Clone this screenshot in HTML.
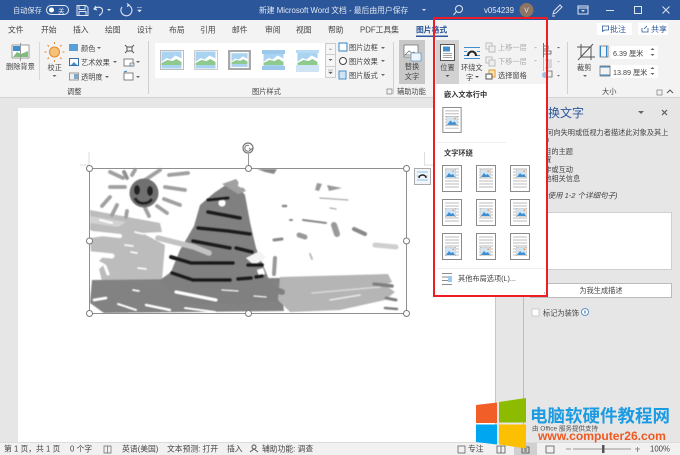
<!DOCTYPE html>
<html><head><meta charset="utf-8"><style>
html,body{margin:0;padding:0;background:#e6e6e6;width:680px;height:455px;overflow:hidden}
svg{display:block;filter:blur(.35px);font-size:7.2px}
text{font-family:"Liberation Sans","Noto Sans CJK SC",sans-serif;fill:#444}
.w{fill:#e4e9f2}.g{fill:#aaa}.b{font-weight:700;fill:#333}
.mid{text-anchor:middle}
</style></head><body>
<svg width="680" height="455" viewBox="0 0 680 455" xmlns="http://www.w3.org/2000/svg">
<defs>
<symbol id="th" viewBox="0 0 23 20"><rect width="23" height="20" fill="#fff"/><rect x="1.500" y="1.500" width="20" height="17" fill="#a9d3f0"/><path d="M1.500 12l5-4 4 1.500 5-4 6 3v7h-20z" fill="#fff"/><path d="M1.500 13l6-3 5 1 4-2 5 3v3h-20z" fill="#8ec98e"/><rect x="1.500" y="15" width="20" height="3.500" fill="#a9d3f0"/></symbol>
<symbol id="pg" viewBox="0 0 20 27"><rect x=".5" y=".5" width="19" height="26" fill="#fff" stroke="#8a8a8a"/><path d="M3 4h14M3 7h14M3 10h14M3 13h14M3 16h14M3 19h14M3 22h14" stroke="#bbb"/></symbol>
<symbol id="pc" viewBox="0 0 11 9"><rect width="11" height="9" fill="#fff" stroke="#777" stroke-width=".6"/><rect x="1" y="1" width="9" height="7" fill="#cfe4f5"/><path d="M1 8l3-4 2 2 2-1 2 3z" fill="#3f8fd0"/><rect x="7.500" y="1.500" width="1.500" height="1.500" fill="#ee9a55"/></symbol>
<filter id="soft"><feGaussianBlur stdDeviation=".5"/></filter>
</defs>

<!-- base -->
<rect width="680" height="455" fill="#e6e6e6"/>
<rect width="680" height="20" fill="#2b579a"/>
<rect y="20" width="680" height="77" fill="#f3f3f3"/>
<rect y="97" width="680" height="1" fill="#d2d2d2"/>

<!-- title bar -->
<text x="13" y="13" class="w">自动保存</text>
<rect x="46.500" y="5.500" width="22" height="9" rx="4.500" fill="none" stroke="#e4e9f2"/>
<circle cx="51.500" cy="10" r="2.500" fill="#fff"/><text x="58" y="13" class="w" style="font-size:6.500px">关</text>
<path d="M77 5.500h9l2 2v8h-11zM79 5.500v4h6v-4M79 15.500v-4h7v4" fill="none" stroke="#dfe5f0"/>
<path d="M96 6l-2 3 3 1M94.500 9c3-3 8-2 8 1.500 0 2-1.500 4-3.500 5" fill="none" stroke="#dfe5f0" stroke-width="1.100"/>
<path d="M107 9l2 2 2-2z" fill="#dfe5f0"/>
<path d="M127 6.500l2-1.500-2-1.500M128 5a5.500 5.500 0 1 1-6 2" fill="none" stroke="#dfe5f0" stroke-width="1.100"/>
<path d="M137 7.500h5M137.500 10l2 2 2-2z" fill="#dfe5f0" stroke="#dfe5f0" stroke-width=".5"/>
<text x="259" y="13" class="w" style="font-size:7.800px">新建 Microsoft Word 文档 - 最后由用户保存</text>
<path d="M422 9l2 2 2-2z" fill="#dfe5f0"/>
<circle cx="459" cy="9" r="3.500" fill="none" stroke="#dfe5f0"/><path d="M456.500 11.500l-3 3.500" stroke="#dfe5f0"/>
<text x="484" y="13" class="w" style="font-size:7.800px">v054239</text>
<circle cx="526.500" cy="10" r="7" fill="#8d7463"/><text x="526.500" y="12.500" class="w mid" style="font-size:7px">V</text>
<path d="M553 14l1-3 6-6 2 2-6 6zM552 16h3" fill="none" stroke="#dfe5f0"/>
<path d="M578 6h10v8h-10zM578 8h10" fill="none" stroke="#dfe5f0"/><path d="M581 10h4l-2 2z" fill="#dfe5f0"/>
<path d="M606 10.500h8" stroke="#dfe5f0"/>
<rect x="634.500" y="6.500" width="7" height="7" fill="none" stroke="#dfe5f0"/>
<path d="M662.500 6.500l7 7M669.500 6.500l-7 7" stroke="#dfe5f0"/>

<!-- tabs -->
<g style="font-size:7.800px">
<text x="8" y="32.500">文件</text><text x="41" y="32.500">开始</text><text x="73" y="32.500">插入</text><text x="105" y="32.500">绘图</text><text x="137" y="32.500">设计</text><text x="169" y="32.500">布局</text><text x="200" y="32.500">引用</text><text x="232" y="32.500">邮件</text><text x="265" y="32.500">审阅</text><text x="296" y="32.500">视图</text><text x="328" y="32.500">帮助</text><text x="360" y="32.500">PDF工具集</text>
<text x="416" y="32.500" style="fill:#2b579a;font-weight:700">图片格式</text>
</g>
<rect x="416" y="35.500" width="32" height="1.500" fill="#2b579a"/>
<rect x="597" y="23" width="35" height="12" fill="#fff"/><rect x="638" y="23" width="30" height="12" fill="#fff"/>
<path d="M602.500 26h6v4h-4l-2 1.500z" fill="none" stroke="#2b579a" stroke-width=".8"/>
<text x="610" y="32" style="fill:#2b579a;font-size:8px">批注</text>
<path d="M642 28v4h6v-4M644 29l3-3" fill="none" stroke="#2b579a" stroke-width=".8"/>
<text x="651" y="32" style="fill:#2b579a;font-size:8px">共享</text>

<!-- ribbon: adjust -->
<rect x="12" y="45" width="17" height="13" fill="#fff" stroke="#777" stroke-width=".7"/>
<rect x="13" y="46" width="8" height="5" fill="#3f8fd0"/><path d="M13 57l4-5 4 2 7-3v6z" fill="#7bbf7b"/><path d="M20.500 43v18" stroke="#999"/>
<text x="6" y="69">删除背景</text>
<path d="M39.500 42v38" stroke="#d8d8d8"/>
<circle cx="54.500" cy="52" r="5" fill="#f5c27a" stroke="#e48a2c"/>
<path d="M54.500 44v-2M54.500 62v-2M46.500 52h-2M64.500 52h-2M49 46.500l-1.500-1.500M60 46.500l1.500-1.500M49 57.500l-1.500 1.500M60 57.500l1.500 1.500" stroke="#e48a2c"/>
<text x="47.500" y="70">校正</text><path d="M52.500 75l2 2 2-2z" fill="#666"/>
<rect x="69" y="44" width="9" height="7" fill="#5aa0d8"/><text x="81" y="51">颜色</text><path d="M97 47l2 2 2-2z" fill="#666"/>
<rect x="69.500" y="58.500" width="9" height="7" fill="#fff" stroke="#3a6ea5"/><path d="M71 65l3-3 3 3z" fill="#3f8fd0"/><text x="81" y="65">艺术效果</text><path d="M113 61l2 2 2-2z" fill="#666"/>
<rect x="69.500" y="73" width="9" height="7" fill="#eee" stroke="#999"/><rect x="74" y="74" width="4" height="5" fill="#7aa8d0"/><text x="81" y="79.500">透明度</text><path d="M105 76l2 2 2-2z" fill="#666"/>
<path d="M125 45l2 2h5l2-2M134 53l-2-2v-4M125 53l2-2h5M127 51v-4" fill="none" stroke="#555"/>
<rect x="124" y="59" width="9" height="7" fill="#fff" stroke="#666" stroke-width=".8"/><path d="M130 63h4v3h-4z" fill="#cfe4f5" stroke="#555" stroke-width=".6"/><path d="M136 61l2 2 2-2z" fill="#666"/>
<rect x="124" y="73" width="9" height="7" fill="#fff" stroke="#666" stroke-width=".8"/><path d="M124 72l3-1" stroke="#2f86c8"/><path d="M136 76l2 2 2-2z" fill="#666"/>
<text x="67" y="94">调整</text>
<path d="M148.500 41v53" stroke="#cfcfcf"/>

<!-- gallery -->
<rect x="155" y="43" width="170" height="35" fill="#fff"/>
<use href="#th" x="160" y="50" width="23" height="20"/><rect x="160.500" y="50.500" width="23" height="19" fill="none" stroke="#bbb"/>
<use href="#th" x="194" y="50" width="23" height="20"/><rect x="194.500" y="50.500" width="23" height="19" fill="none" stroke="#ccc"/>
<rect x="228" y="50" width="23" height="20" fill="#a8a8a8"/><use href="#th" x="230" y="52" width="19" height="16"/>
<use href="#th" x="262" y="50" width="23" height="20"/><rect x="262" y="50" width="23" height="4" fill="#9cc9ea"/><rect x="262" y="66" width="23" height="4" fill="#9cc9ea"/>
<use href="#th" x="296" y="50" width="23" height="20"/><rect x="296" y="50" width="23" height="3" fill="#b8daf2"/><rect x="296" y="65" width="23" height="7" fill="#cfe4f5"/>
<rect x="325.500" y="43.500" width="10" height="11" fill="#f6f6f6" stroke="#ccc"/><rect x="325.500" y="54.500" width="10" height="12" fill="#f6f6f6" stroke="#ccc"/><rect x="325.500" y="66.500" width="10" height="11" fill="#f6f6f6" stroke="#ccc"/>
<path d="M328.500 50l2-2 2 2z" fill="#bbb"/><path d="M328.500 59l2 2 2-2z" fill="#666"/><path d="M328 70h5M328.500 72l2 2 2-2z" fill="#666" stroke="#666" stroke-width=".4"/>
<text x="252" y="94">图片样式</text>
<rect x="339" y="43" width="8" height="8" fill="#fff" stroke="#2f86c8"/><text x="349" y="50">图片边框</text><path d="M381 47l2 2 2-2z" fill="#666"/>
<circle cx="343" cy="61" r="3.500" fill="#fff" stroke="#444"/><text x="349" y="64">图片效果</text><path d="M381 60l2 2 2-2z" fill="#666"/>
<rect x="339" y="71" width="7" height="8" fill="#cfe4f5" stroke="#4e8fc4"/><text x="349" y="78">图片版式</text><path d="M381 74l2 2 2-2z" fill="#666"/>
<path d="M393.500 42v52" stroke="#d0d0d0"/>
<rect x="387" y="89" width="5" height="5" fill="none" stroke="#777" stroke-width=".7"/>

<!-- alt text btn -->
<rect x="399" y="40" width="26" height="44" fill="#c8c8c8"/>
<rect x="404" y="45" width="14" height="12" fill="#fff" stroke="#666" stroke-width=".7"/><path d="M405 55l4-4 3 2 2-1 3 3z" fill="none" stroke="#666" stroke-width=".7"/>
<rect x="411" y="53" width="10" height="8" fill="#eef4fa" stroke="#5b95c8" stroke-width=".7"/>
<text x="412" y="69" class="mid">替换</text><text x="412" y="79" class="mid">文字</text>
<text x="397" y="94">辅助功能</text>

<!-- position & wrap -->
<rect x="436" y="40" width="23" height="44" fill="#d2d2d2"/>
<rect x="440.500" y="44.500" width="14" height="16" fill="#fff" stroke="#555"/><rect x="443" y="46.500" width="7" height="5" fill="#3f8fd0"/><path d="M443 53.500h9M443 55.500h9M443 57.500h9" stroke="#888" stroke-width=".7"/>
<text x="447.500" y="70" class="mid">位置</text><path d="M445.500 75l2 2 2-2z" fill="#555"/>
<path d="M464 47.500h16M464 51.500h3M477 51.500h3M464 55.500h3M477 55.500h3M464 58.500h16" stroke="#3f8fd0"/>
<path d="M468 56c0-6 8-6 8 0" fill="none" stroke="#222" stroke-width="2"/>
<text x="461" y="70">环绕文</text><text x="466" y="80">字</text><path d="M475 76l2 2 2-2z" fill="#555"/>
<g fill="none" stroke="#bdbdbd"><rect x="486" y="43" width="6" height="6"/><rect x="489" y="46" width="6" height="6" fill="#eee"/><rect x="486" y="57" width="6" height="6"/><rect x="489" y="60" width="6" height="6" fill="#eee"/></g>
<text x="498" y="50" class="g">上移一层</text><path d="M534 47l1.500 1.500 1.500-1.500z" fill="#bbb"/>
<text x="498" y="64" class="g">下移一层</text><path d="M534 60l1.500 1.500 1.500-1.500z" fill="#bbb"/>
<rect x="489" y="70" width="6" height="7" fill="#fbe3b8" stroke="#e49a2e"/><rect x="486" y="74" width="6" height="5" fill="#fff" stroke="#555"/>
<text x="498" y="78">选择窗格</text>
<path d="M543.500 43v15M544 46h4v3h-4M544 51h7v3h-7" fill="none" stroke="#555" stroke-width=".8"/><path d="M557 47l1.500 1.500 1.500-1.500z" fill="#666"/>
<path d="M543.500 57v14M545 60h4v8h-4M551 59v9" fill="none" stroke="#aaa" stroke-width=".8"/><path d="M557 61l1.500 1.500 1.500-1.500z" fill="#bbb"/>
<circle cx="545" cy="75" r="3" fill="#9bc3e6"/><path d="M548 71h4v6h-4" fill="none" stroke="#666" stroke-width=".8"/><path d="M557 75l1.500 1.500 1.500-1.500z" fill="#666"/>
<path d="M567.500 42v52" stroke="#d0d0d0"/>

<!-- crop & size -->
<path d="M577 47h14v13M581 44v13h14M578 60l15-16" fill="none" stroke="#555"/>
<text x="577" y="70">裁剪</text><path d="M583 75l2 2 2-2z" fill="#666"/>
<path d="M600 46h8v11h-8z" fill="none" stroke="#666" stroke-width=".7"/><path d="M600.500 46v11M606.500 46v11" stroke="#2f86c8"/>
<rect x="611" y="46" width="47" height="13" fill="#fff"/><text x="613" y="56">6.39 厘米</text><path d="M650.500 50l2-2 2 2zM650.500 54l2 2 2-2z" fill="#666"/>
<path d="M600 66h10v10h-10z" fill="none" stroke="#666" stroke-width=".7"/><path d="M600 67h10M600 75h10" stroke="#2f86c8"/>
<rect x="611" y="65" width="47" height="13" fill="#fff"/><text x="613" y="75">13.89 厘米</text><path d="M650.500 69l2-2 2 2zM650.500 73l2 2 2-2z" fill="#666"/>
<text x="602" y="94">大小</text>
<rect x="657" y="90" width="5" height="5" fill="none" stroke="#777" stroke-width=".7"/>
<path d="M667 93l3-3 3 3" fill="none" stroke="#555"/>

<!-- doc page -->
<rect x="18" y="108" width="477" height="334" fill="#fff"/>
<path d="M89 152v13h-9M424.500 152v13h9" stroke="#ddd" fill="none"/>
<rect x="495" y="98" width="28" height="344" fill="#e6e6e6"/>
<path d="M495.500 98v344" stroke="#c6c6c6"/>
<path d="M523.500 98v344" stroke="#bcbcbc"/>

<!-- picture -->
<g filter="url(#soft)">
<path d="M90 210l70 13 2 9-20 1 23 12-3 35-60 1-3-12 6-5-6-3 6-6-14-3-1-14 14-2-14-6z" fill="#bcbcbc"/>
<path d="M90 216l36 6-8 5-28-4z" fill="#d2d2d2"/>
<g fill="none" stroke="#fff" stroke-linecap="round">
 <path d="M100 220l12 3" stroke-width="2"/><path d="M92 233l28 3" stroke-width="4"/><path d="M135 232l8 2" stroke-width="1.500"/>
 <path d="M92 254l20 2" stroke-width="5"/><path d="M125 245l8 1" stroke-width="1.500"/><path d="M131 252l6 1" stroke-width="1.500"/><path d="M138 268l8 1" stroke-width="1.500"/>
 <path d="M105 266l3 8" stroke-width="3"/><path d="M90 272l6 0" stroke-width="6"/>
</g>
<path d="M92 280l188-2 4 33-180 2-14-10z" fill="#828282"/>
<path d="M233 180l12 15 5 27 6 26 14 34 12 20-100 2-22-24 11-8 9-22 14-24 6-21 14-12z" fill="#808080"/>
<path d="M222 184l14-5 10 12-8 3z" fill="#a0a0a0"/>
<path d="M239 180l6 3-3 5-4-2z" fill="#fff"/><circle cx="222" cy="203" r="3.500" fill="#fff"/>
<path d="M246 258l14-7 6 7-12 7z" fill="#f4f4f4"/><path d="M257 270l6-2 2 6-6 2z" fill="#fff"/>
<g fill="none" stroke="#1a1a1a" stroke-width="3.800" stroke-linecap="round">
 <path d="M208 200l20-2" stroke-width="3.300"/><path d="M208 212l32 6"/><path d="M198 228l30 3 22 3"/><path d="M193 241l37 7"/><path d="M236 248l16 4"/><path d="M171 257l20 6 42 0"/><path d="M248 265l14 0"/><path d="M172 273l21 7 37 0"/><path d="M238 279l13-1"/><path d="M256 277l6-1"/>
</g>
<path d="M158 238l36 9 15 6" fill="none" stroke="#c2c2c2" stroke-width="5.500" stroke-linecap="round"/>
<g fill="none" stroke="#fff" stroke-linecap="round">
 <path d="M176 292l40 8" stroke-width="3"/><path d="M146 305l24 5" stroke-width="2.200"/><path d="M118 304l18 6" stroke-width="1.800"/><path d="M94 300l12-2" stroke-width="2.500"/><path d="M133 290l6 1" stroke-width="1.500"/><path d="M185 308l30 4" stroke-width="1.800"/><path d="M222 290l16 1" stroke-width="1"/><path d="M262 285l10 3" stroke-width="1"/>
 <path d="M254 296l12 1" stroke-width="1"/>
</g>
<path d="M280 277l108-3 4 8-7 3 10 7-10 8-45 10-50 2-12-12z" fill="#b5b5b5"/>
<g fill="none" stroke-linecap="round">
 <path d="M312 293l68-6" stroke="#d8d8d8" stroke-width="1.500"/><path d="M330 300l30-5" stroke="#e8e8e8" stroke-width="1.500"/>
 <g stroke="#808080"><path d="M374 284l18 2" stroke-width="3.500"/><path d="M386 298l10 2" stroke-width="3"/><path d="M385 308l12 1" stroke-width="2.500"/><path d="M275 258l-1 16" stroke="#999" stroke-width="4"/></g>
 <path d="M264 286l18 6" stroke="#808080" stroke-width="6"/>
</g>
<path d="M257 169h20l-3 5-9-2z" fill="#888"/>
<path d="M315 190l2-7 5 1-3 7zM327 185l15 3-13 3z" fill="#9a9a9a"/>
<g fill="none" stroke="#888" stroke-linecap="round">
 <path d="M283 206h3" stroke-width="2.500"/><path d="M303 220l23 3" stroke-width="2"/><path d="M334 225l3 9" stroke-width="6" stroke="#999"/><path d="M354 229l11 5" stroke-width="4"/>
 <path d="M299 235l6 2" stroke-width="5" stroke="#999"/><path d="M274 240l8-1" stroke-width="3"/><path d="M320 198l28 2" stroke-width="1.200" stroke="#aaa"/>
 <path d="M375 245l21 2" stroke-width="5" stroke="#cfcfcf"/><path d="M290 220l2 0" stroke-width="2"/><path d="M330 208l6 1" stroke-width="1.200" stroke="#aaa"/><path d="M310 254l2 5" stroke-width="2" stroke="#bbb"/>
</g>
<g fill="none" stroke="#a0a0a0" stroke-width="3.800" stroke-linecap="round">
 <path d="M110 172l13 6"/><path d="M124 172l3 6" stroke="#909090"/><path d="M135 170l-3 5"/><path d="M145 180l15-10"/><path d="M169 175l19-2"/><path d="M110 187l15 0"/><path d="M165 187l20 3"/>
 <path d="M102 206l8-9"/><path d="M112 215l5-10"/><path d="M126 217l1-6"/><path d="M149 216l-4-8"/><path d="M167 213l-10-7"/><path d="M180 205l-16-6"/>
</g>
<circle cx="144" cy="193" r="14.500" fill="#6f6f6f"/>
<ellipse cx="137" cy="190" rx="3" ry="5" fill="#222"/><ellipse cx="150" cy="191" rx="3" ry="5" fill="#222"/>
<path d="M135 198c3 7 13 7 17 1" fill="none" stroke="#222" stroke-width="3"/>
</g>
<!-- selection frame -->
<path d="M248.500 154v14" stroke="#999"/>
<rect x="89.500" y="168.500" width="317" height="145" fill="none" stroke="#8f8f8f"/>
<g fill="#fff" stroke="#7b7b7b"><circle cx="89.500" cy="168.500" r="3"/><circle cx="248.500" cy="168.500" r="3"/><circle cx="406.500" cy="168.500" r="3"/><circle cx="89.500" cy="241" r="3"/><circle cx="406.500" cy="241" r="3"/><circle cx="89.500" cy="313.500" r="3"/><circle cx="248.500" cy="313.500" r="3"/><circle cx="406.500" cy="313.500" r="3"/></g>
<circle cx="248" cy="148" r="5" fill="none" stroke="#777" stroke-width="1.200"/><path d="M249 145.500a3 3 0 1 0 1.500 4M253 148l-2 1.500-2-1.500" fill="none" stroke="#777" stroke-width="1"/>
<rect x="414.500" y="168.500" width="16" height="16" fill="#f2f6fa" stroke="#aaa"/>
<path d="M417 172h11M417 176h2M426 176h2M417 180h11" stroke="#6fb0e0" stroke-width=".8"/><path d="M419 178c0-4 7-4 7 0" fill="none" stroke="#222" stroke-width="1.500"/>

<!-- pane -->
<text x="536" y="117" style="font-size:12px;fill:#2b579a">替换文字</text>
<path d="M638 111l3 3 3-3z" fill="#666"/><path d="M662 110l5 5M667 110l-5 5" stroke="#555" stroke-width="1.100"/>
<text x="539" y="135">如何向失明或低视力者描述此对象及其上</text>
<text x="542" y="143">中</text>
<text x="537" y="154">项目的主题</text>
<text x="537" y="162">布置</text>
<text x="537" y="172">操作或互动</text>
<text x="537" y="181">其他相关信息</text>
<text x="545" y="198" style="font-style:italic;font-size:7.500px">(使用 1-2 个详细句子)</text>
<rect x="530.500" y="212.500" width="141" height="57" fill="#fff" stroke="#cfcfcf"/>
<rect x="530.500" y="283.500" width="141" height="14" fill="#fff" stroke="#bbb"/>
<text x="601" y="293" class="mid">为我生成描述</text>
<rect x="532" y="309" width="7" height="7" fill="#fff" stroke="#ccc"/>
<text x="543" y="315.500">标记为装饰</text>
<circle cx="585" cy="312" r="3.500" fill="#fff" stroke="#5b95c8"/><path d="M585 310.500v3" stroke="#2b579a"/>

<!-- dropdown -->
<rect x="435" y="84" width="113" height="212" fill="#fff"/>
<text x="444" y="97" class="b">嵌入文本行中</text>
<use href="#pg" x="442" y="107" width="20" height="26"/><use href="#pc" x="446" y="116" width="12" height="10"/>
<path d="M437 142.500h69" stroke="#eee"/>
<text x="444" y="155.500" class="b">文字环绕</text>
<use href="#pg" x="442" y="165" width="20" height="27"/><use href="#pc" x="445" y="169" width="11" height="9"/>
<use href="#pg" x="476" y="165" width="20" height="27"/><use href="#pc" x="480" y="169" width="11" height="9"/>
<use href="#pg" x="510" y="165" width="20" height="27"/><use href="#pc" x="516" y="169" width="11" height="9"/>
<use href="#pg" x="442" y="199" width="20" height="27"/><use href="#pc" x="445" y="208" width="11" height="9"/>
<use href="#pg" x="476" y="199" width="20" height="27"/><use href="#pc" x="480" y="208" width="11" height="9"/>
<use href="#pg" x="510" y="199" width="20" height="27"/><use href="#pc" x="516" y="208" width="11" height="9"/>
<use href="#pg" x="442" y="233" width="20" height="27"/><use href="#pc" x="445" y="247" width="11" height="9"/>
<use href="#pg" x="476" y="233" width="20" height="27"/><use href="#pc" x="480" y="247" width="11" height="9"/>
<use href="#pg" x="510" y="233" width="20" height="27"/><use href="#pc" x="516" y="247" width="11" height="9"/>
<path d="M437 268.500h108" stroke="#eee"/>
<path d="M442 274.500h10M442 278h6M442 281.500h6M442 285.500h10" stroke="#666" stroke-width=".8" transform="translate(0 -1)"/>
<rect x="448" y="276" width="4" height="6" fill="#9cc9ea"/>
<text x="458" y="281">其他布局选项(L)...</text>
<path d="M544 293h1M546 293h1M546 291h1" stroke="#999"/>
<rect x="434" y="18" width="113" height="278" fill="none" stroke="#ee1c25" stroke-width="2"/>

<!-- status -->
<rect y="442" width="680" height="13" fill="#f1f1f1"/>
<rect y="442" width="680" height="1" fill="#dcdcdc"/>
<g style="font-size:7.800px">
<text x="4" y="451.500">第 1 页，共 1 页</text><text x="70" y="451.500">0 个字</text>
<text x="122" y="451.500">英语(美国)</text><text x="167" y="451.500">文本预测: 打开</text><text x="227" y="451.500">插入</text><text x="262" y="451.500">辅助功能: 调查</text>
<text x="468" y="451.500">专注</text><text x="650" y="451.500">100%</text>
</g>
<path d="M104 446h7v7h-7zM107.500 446v7" fill="none" stroke="#666" stroke-width=".7"/>
<circle cx="254" cy="447" r="2" fill="none" stroke="#555"/><path d="M250 452l4-3 4 3" fill="none" stroke="#555"/>
<path d="M458 446h7v7h-7z" fill="none" stroke="#555" stroke-width=".7"/>
<rect x="514" y="443" width="23" height="12" fill="#d0d0d0"/>
<path d="M497 446h8v7h-8zM501 446v7" fill="none" stroke="#555" stroke-width=".8"/>
<path d="M522 447h7v6h-7zM524 449h3M524 451h3" fill="none" stroke="#444" stroke-width=".8"/>
<path d="M546 446h8v7h-8z" fill="none" stroke="#555" stroke-width=".8"/>
<path d="M566 449h5M573 449h58M635 449h5M637.500 447v5" stroke="#777" stroke-width=".8"/>
<rect x="602" y="445" width="2.500" height="8" fill="#555"/>

<!-- watermark -->
<path d="M476 405l21-2.500v20.500h-21z" fill="#f25e27"/>
<path d="M499 402l27-4v24.500h-27z" fill="#8dbb00"/>
<path d="M476 424.500h21v20l-21-2.500z" fill="#00a6ef"/>
<path d="M499 424.500h27v24l-27-4z" fill="#fdc000"/>
<text x="530" y="422" style="font-size:17.500px;font-weight:700;fill:#1b9be2">电脑软硬件教程网</text>
<text x="532" y="430.500" style="font-size:6.500px;fill:#555">由 Office 服务提供支持</text>
<text x="538" y="440" style="font-size:12.100px;font-weight:700;fill:#f0581f">www.computer26.com</text>
</svg>
</body></html>
